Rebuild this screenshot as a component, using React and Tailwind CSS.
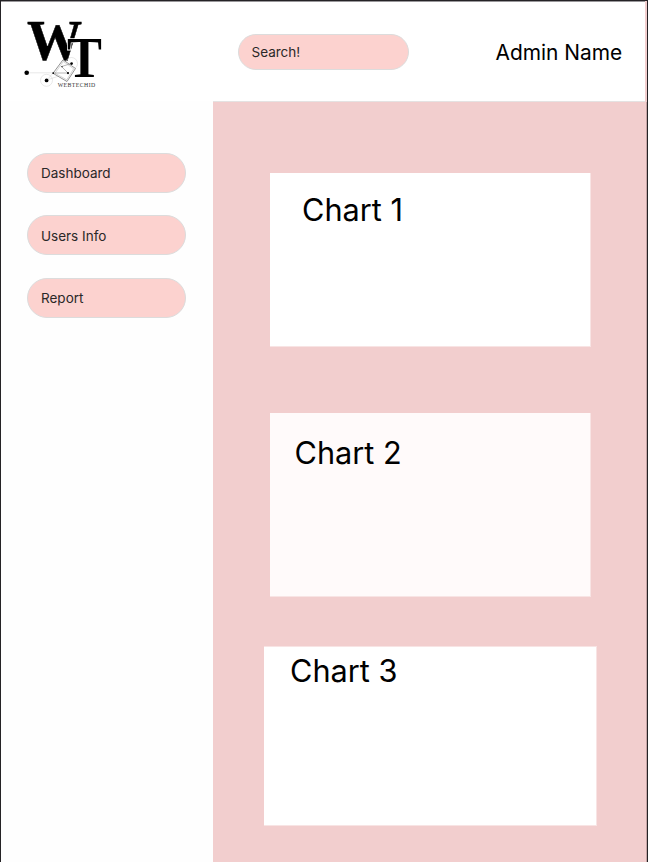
function Logo() {
  return (
    <svg className="block h-[92px] w-[110px]" viewBox="0 0 110 92" aria-label="WebTechID">
      <g fontFamily="'Liberation Serif', serif" fontWeight="700" fill="#000">
        <text transform="translate(27 59.6) scale(.96 1)" fontSize="57.5" stroke="#000" strokeWidth=".5">W</text>
        <text transform="translate(67 77) scale(.91 1)" fontSize="57.5" stroke="#fff" strokeWidth="1.6" paintOrder="stroke">T</text>
      </g>
      <g fill="none" stroke="#d0d0d0" strokeWidth=".5">
        <circle cx="46.5" cy="80.3" r="6" />
        <circle cx="71.5" cy="63.5" r="6" />
        <path d="M27 72.8H68M47 80L53 73M47 80L68 73" />
      </g>
      <path d="M63 59.8L75.5 68.5L67 81.5L53 73.3Z" fill="#fff" stroke="#777" strokeWidth=".8" />
      <path d="M63.3 61.5L73.7 68.8L66.7 79.8L55 73.2Z" fill="none" stroke="#aaa" strokeWidth=".5" />
      <path d="M53 73H68L61.5 66.5L71.5 63.5" fill="none" stroke="#888" strokeWidth=".6" />
      <circle cx="26.7" cy="72.8" r="2.3" />
      <circle cx="46.6" cy="80.4" r="1.9" />
      <circle cx="71.6" cy="63.6" r="1.3" />
      <circle cx="68" cy="73.1" r="1.1" />
      <circle cx="53.2" cy="73.1" r=".9" />
      <circle cx="62" cy="66.7" r=".6" />
      <text x="57.7" y="86.5" fontFamily="'Liberation Serif', serif" fontSize="5.8" textLength="37.5" fill="#333">WEBTECHID</text>
    </svg>
  );
}

function NavItem({ children }) {
  return (
    <a className="flex h-10 w-[159px] items-center rounded-full border border-[#dcdcdc] bg-[#fcd2cf] pt-px pl-[13px] text-[13.5px] text-[#2a2828]">
      {children}
    </a>
  );
}

function Card({ title, className }) {
  return (
    <section className={"border-r border-b border-[#f8e4e4] text-[30.7px] leading-[36px] text-black " + className}>
      <h2>{title}</h2>
    </section>
  );
}

export default function App() {
  return (
    <div className="flex h-[862px] w-[648px] flex-col overflow-hidden border-t border-r border-l border-[#252326] bg-[#f2cece] font-['Inter',sans-serif]">
      <header className="mr-[1px] flex h-[101px] w-[644px] shrink-0 border-t border-b border-t-[#99979a] border-b-[#e5e2e2] bg-white">
        <div className="-mt-[2px] -ml-[1px] w-[237.5px] shrink-0">
          <Logo />
        </div>
        <div className="mt-[32px] flex h-[36px] w-[171px] shrink-0 items-center rounded-full border border-[#dcdcdc] bg-[#fcd2cf] pl-[13px] text-[13.5px] text-[#2a2828]">
          Search!
        </div>
        <div className="mt-[37px] ml-[87px] text-[20.9px] leading-[28px] whitespace-nowrap text-black">Admin Name</div>
      </header>
      <div className="flex min-h-0 grow">
        <aside className="relative -mt-px w-[212px] shrink-0 bg-[#fefefe] pt-[52px] pl-[26px]">
          <nav className="flex flex-col gap-[22.3px]">
            <NavItem>Dashboard</NavItem>
            <NavItem>Users Info</NavItem>
            <NavItem>Report</NavItem>
          </nav>
        </aside>
        <main className="grow border-r border-[#c5a5a5]">
          <Card title="Chart 1" className="mt-[71px] ml-[57px] h-[174px] w-[321px] bg-white pt-[19px] pl-[32px]" />
          <Card title="Chart 2" className="mt-[66px] ml-[57px] h-[184px] w-[321px] bg-[#fffafa] pt-[22px] pl-[24.5px]" />
          <Card title="Chart 3" className="mt-[49px] ml-[51px] h-[180px] w-[333px] border-t bg-white pt-[6px] pl-[26px]" />
        </main>
      </div>
    </div>
  );
}
